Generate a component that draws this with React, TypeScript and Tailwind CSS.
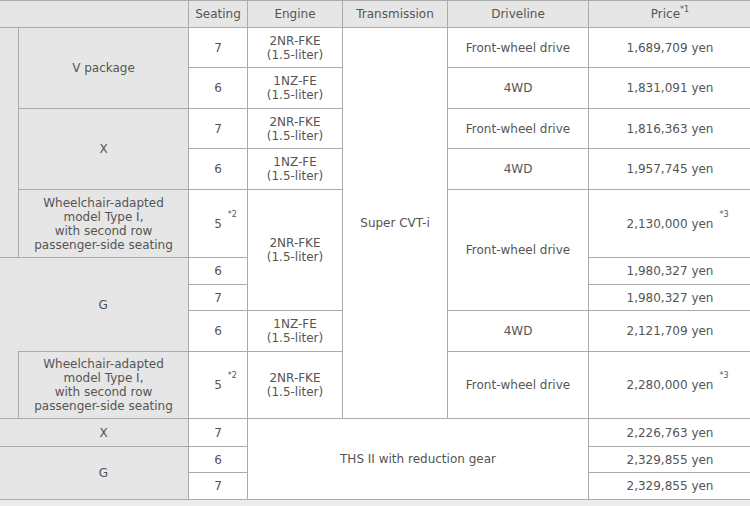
import React from 'react'

const cell = 'border border-[#ababab] text-center align-middle'
const gray = 'bg-[#e6e6e6]'
const white = 'bg-white'

const Sup = ({ children }: { children: React.ReactNode }) => (
  <sup className="text-[8px] leading-none align-top relative top-[-1px]">
    {children}
  </sup>
)

const Engine = ({ name }: { name: string }) => (
  <>
    {name}
    <br />
    (1.5-liter)
  </>
)

const Wheelchair = () => (
  <>
    Wheelchair-adapted
    <br />
    model Type I,
    <br />
    with second row
    <br />
    passenger-side seating
  </>
)

const Noted = ({ text, note }: { text: string; note: string }) => (
  <span className="relative inline-block">
    {text}
    <span className="absolute left-full top-[-6px] ml-[6px] text-[8px] leading-none whitespace-nowrap">
      {note}
    </span>
  </span>
)

const App: React.FunctionComponent = () => {
  return (
    <div className="w-[750px] h-[506px] overflow-hidden bg-white">
      <table className="table-fixed border-collapse w-[752px] ml-[-1px] font-['DejaVu_Sans',sans-serif] text-[12px] leading-[14px] text-[#555]">
        <colgroup>
          <col className="w-[19px]" />
          <col className="w-[170px]" />
          <col className="w-[59px]" />
          <col className="w-[95px]" />
          <col className="w-[105px]" />
          <col className="w-[141px]" />
          <col className="w-[163px]" />
        </colgroup>
        <tbody>
          <tr className="h-[27px]">
            <td colSpan={2} className={`${cell} ${gray}`}></td>
            <td className={`${cell} ${gray}`}>Seating</td>
            <td className={`${cell} ${gray}`}>Engine</td>
            <td className={`${cell} ${gray}`}>Transmission</td>
            <td className={`${cell} ${gray}`}>Driveline</td>
            <td className={`${cell} ${gray}`}>
              Price<Sup>*1</Sup>
            </td>
          </tr>

          {/* gasoline, grades above G */}
          <tr className="h-[40px]">
            <td rowSpan={5} className={`${cell} ${gray}`}></td>
            <td rowSpan={2} className={`${cell} ${gray}`}>V package</td>
            <td className={`${cell} ${white}`}>7</td>
            <td className={`${cell} ${white}`}><Engine name="2NR-FKE" /></td>
            <td rowSpan={9} className={`${cell} ${white}`}>Super CVT-i</td>
            <td className={`${cell} ${white}`}>Front-wheel drive</td>
            <td className={`${cell} ${white}`}>1,689,709 yen</td>
          </tr>
          <tr className="h-[41px]">
            <td className={`${cell} ${white}`}>6</td>
            <td className={`${cell} ${white}`}><Engine name="1NZ-FE" /></td>
            <td className={`${cell} ${white}`}>4WD</td>
            <td className={`${cell} ${white}`}>1,831,091 yen</td>
          </tr>
          <tr className="h-[40px]">
            <td rowSpan={2} className={`${cell} ${gray}`}>X</td>
            <td className={`${cell} ${white}`}>7</td>
            <td className={`${cell} ${white}`}><Engine name="2NR-FKE" /></td>
            <td className={`${cell} ${white}`}>Front-wheel drive</td>
            <td className={`${cell} ${white}`}>1,816,363 yen</td>
          </tr>
          <tr className="h-[41px]">
            <td className={`${cell} ${white}`}>6</td>
            <td className={`${cell} ${white}`}><Engine name="1NZ-FE" /></td>
            <td className={`${cell} ${white}`}>4WD</td>
            <td className={`${cell} ${white}`}>1,957,745 yen</td>
          </tr>
          <tr className="h-[68px]">
            <td className={`${cell} ${gray}`}><Wheelchair /></td>
            <td className={`${cell} ${white}`}><Noted text="5" note="*2" /></td>
            <td rowSpan={3} className={`${cell} ${white}`}><Engine name="2NR-FKE" /></td>
            <td rowSpan={3} className={`${cell} ${white}`}>Front-wheel drive</td>
            <td className={`${cell} ${white}`}><Noted text="2,130,000 yen" note="*3" /></td>
          </tr>

          {/* G */}
          <tr className="h-[27px]">
            <td rowSpan={4} className={`${cell} ${gray} border-r-0`}></td>
            <td rowSpan={3} className={`${cell} ${gray} border-l-0`}>G</td>
            <td className={`${cell} ${white}`}>6</td>
            <td className={`${cell} ${white}`}>1,980,327 yen</td>
          </tr>
          <tr className="h-[26px]">
            <td className={`${cell} ${white}`}>7</td>
            <td className={`${cell} ${white}`}>1,980,327 yen</td>
          </tr>
          <tr className="h-[41px]">
            <td className={`${cell} ${white}`}>6</td>
            <td className={`${cell} ${white}`}><Engine name="1NZ-FE" /></td>
            <td className={`${cell} ${white}`}>4WD</td>
            <td className={`${cell} ${white}`}>2,121,709 yen</td>
          </tr>
          <tr className="h-[67px]">
            <td className={`${cell} ${gray}`}><Wheelchair /></td>
            <td className={`${cell} ${white}`}><Noted text="5" note="*2" /></td>
            <td className={`${cell} ${white}`}><Engine name="2NR-FKE" /></td>
            <td className={`${cell} ${white}`}>Front-wheel drive</td>
            <td className={`${cell} ${white}`}><Noted text="2,280,000 yen" note="*3" /></td>
          </tr>

          {/* hybrid */}
          <tr className="h-[28px]">
            <td colSpan={2} className={`${cell} ${gray} pl-[19px]`}>X</td>
            <td className={`${cell} ${white}`}>7</td>
            <td colSpan={3} rowSpan={3} className={`${cell} ${white}`}>THS II with reduction gear</td>
            <td className={`${cell} ${white}`}>2,226,763 yen</td>
          </tr>
          <tr className="h-[26px]">
            <td colSpan={2} rowSpan={2} className={`${cell} ${gray} pl-[19px]`}>G</td>
            <td className={`${cell} ${white}`}>6</td>
            <td className={`${cell} ${white}`}>2,329,855 yen</td>
          </tr>
          <tr className="h-[27px]">
            <td className={`${cell} ${white}`}>7</td>
            <td className={`${cell} ${white}`}>2,329,855 yen</td>
          </tr>
          <tr className="h-[20px]">
            <td colSpan={7} className={`${cell} bg-[#ececec]`}></td>
          </tr>
        </tbody>
      </table>
    </div>
  )
}

export default App
